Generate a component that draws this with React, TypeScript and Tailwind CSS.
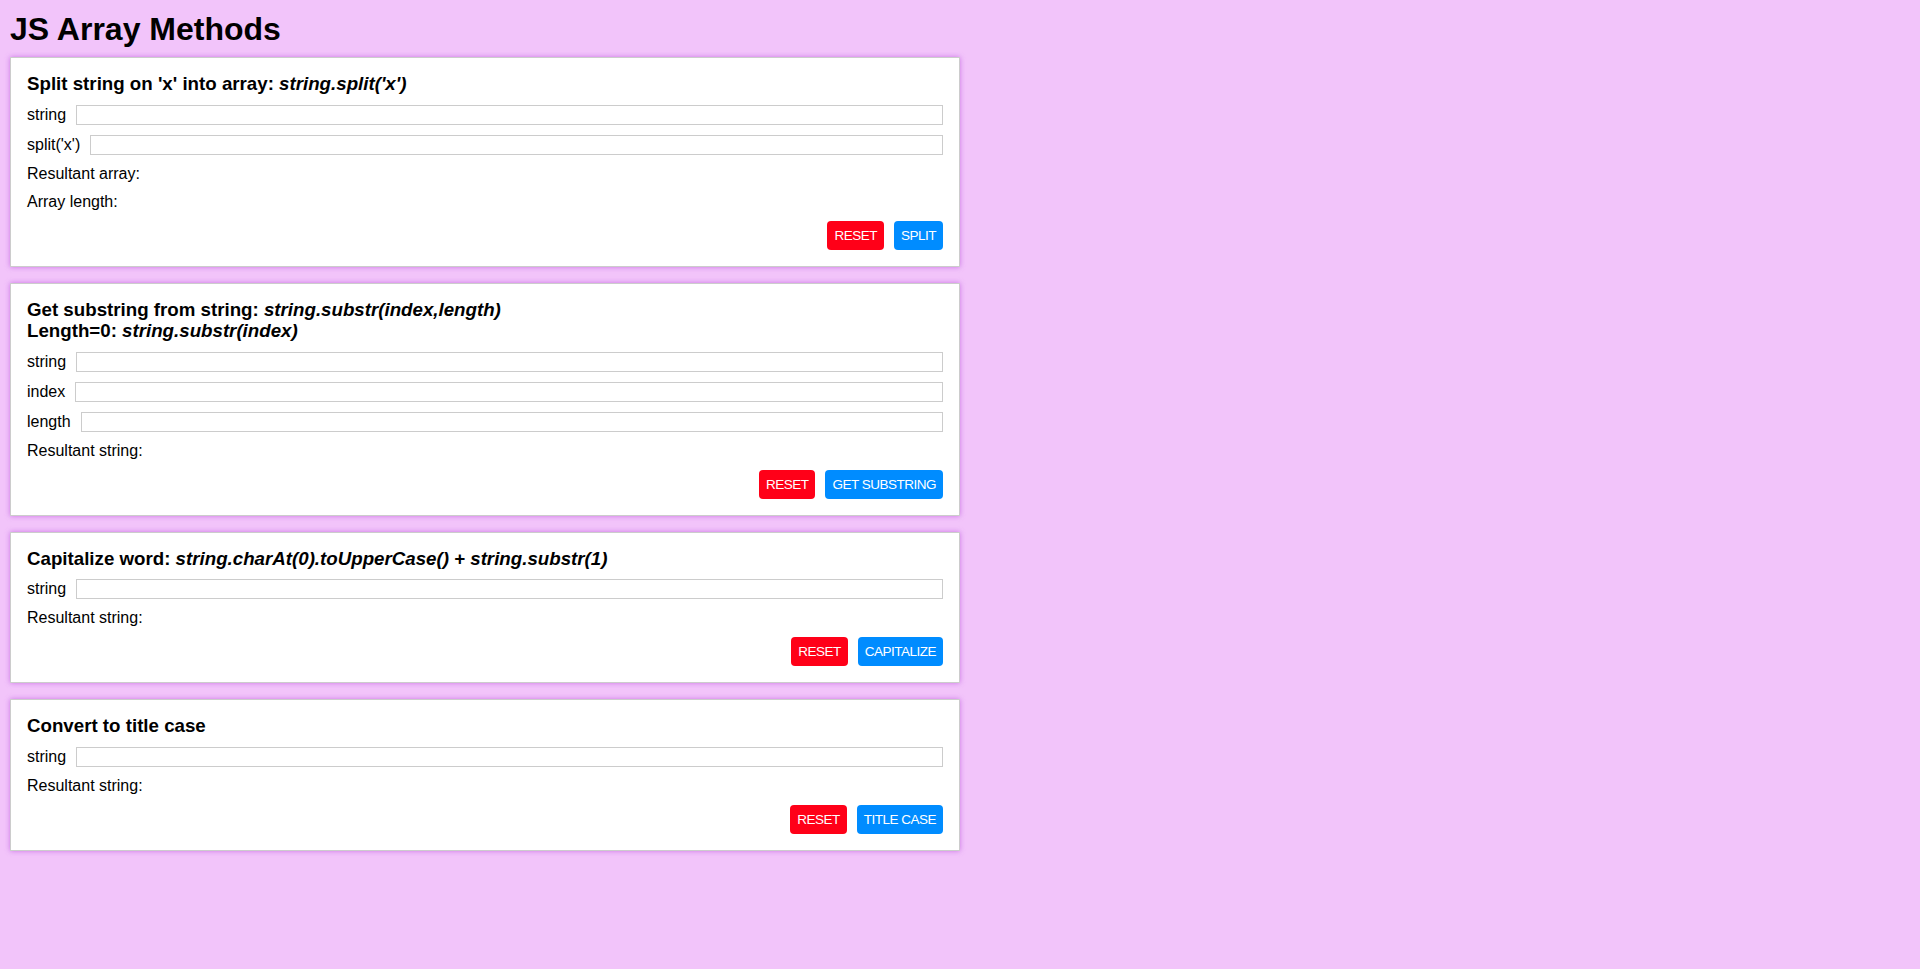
import React from "react";

const font = { fontFamily: '"Liberation Sans", Arial, Helvetica, sans-serif' };

function Field({ label }: { label: string }) {
  return (
    <div className="flex items-center gap-[10px] h-[20px]">
      <label className="text-[16px] leading-[18px] text-black whitespace-nowrap">{label}</label>
      <input
        type="text"
        className="flex-1 h-[20px] border border-[#cccccc] bg-white outline-none px-1 text-[14px]"
      />
    </div>
  );
}

function Line({ text }: { text: string }) {
  return <div className="text-[16px] leading-[18px] text-black">{text}</div>;
}

function Buttons({ action }: { action: string }) {
  return (
    <div className="flex justify-end gap-[10px]">
      <button className="h-[29px] px-[7px] rounded-[4px] bg-[#ff0018] text-white text-[13.5px] tracking-[-0.5px] leading-[29px]">
        RESET
      </button>
      <button className="h-[29px] px-[7px] rounded-[4px] bg-[#008cff] text-white text-[13.5px] tracking-[-0.5px] leading-[29px]">
        {action}
      </button>
    </div>
  );
}

function Card({ children }: { children: React.ReactNode }) {
  return (
    <div className="w-[950px] bg-white border border-[#cccccc] shadow-[0_0_5px_rgba(190,90,225,0.75)] pt-[15px] pb-4 px-4 flex flex-col gap-[10px]">
      {children}
    </div>
  );
}

function Title({ children }: { children: React.ReactNode }) {
  return <h3 className="text-[18.72px] leading-[21.5px] font-bold text-black">{children}</h3>;
}

export default function App() {
  return (
    <div className="min-h-[969px] w-full bg-[#f2c4fa] px-[10px] pt-[11px] pb-10" style={font}>
      <h1 className="text-[32px] leading-[36px] font-bold text-black mb-[10px]">JS Array Methods</h1>
      <div className="flex flex-col gap-4">
        <Card>
          <Title>
            Split string on 'x' into array: <i>string.split('x')</i>
          </Title>
          <Field label="string" />
          <Field label="split('x')" />
          <Line text="Resultant array:" />
          <Line text="Array length:" />
          <Buttons action="SPLIT" />
        </Card>
        <Card>
          <Title>
            Get substring from string: <i>string.substr(index,length)</i>
            <br />
            Length=0: <i>string.substr(index)</i>
          </Title>
          <Field label="string" />
          <Field label="index" />
          <Field label="length" />
          <Line text="Resultant string:" />
          <Buttons action="GET SUBSTRING" />
        </Card>
        <Card>
          <Title>
            Capitalize word: <i>string.charAt(0).toUpperCase() + string.substr(1)</i>
          </Title>
          <Field label="string" />
          <Line text="Resultant string:" />
          <Buttons action="CAPITALIZE" />
        </Card>
        <Card>
          <Title>Convert to title case</Title>
          <Field label="string" />
          <Line text="Resultant string:" />
          <Buttons action="TITLE CASE" />
        </Card>
      </div>
    </div>
  );
}
